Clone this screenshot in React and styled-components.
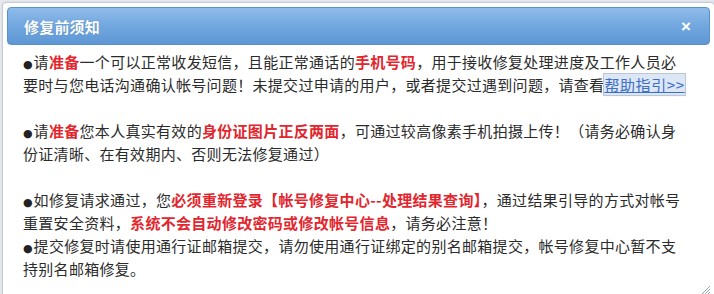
import React from "react";
import styled, { createGlobalStyle } from "styled-components";

const Global = createGlobalStyle`
  html, body { margin: 0; padding: 0; }
  body {
    width: 714px;
    height: 294px;
    overflow: hidden;
    background: #e6eaee;
    font-family: "Noto Sans CJK SC", "Noto Sans", sans-serif;
  }
`;

const Page = styled.div`
  display: flex;
  flex-direction: column;
  padding: 2px 3px 0 2px;
`;

const Dialog = styled.div`
  width: 703px;
  background: #ffffff;
  border: 1px solid #c4ccd6;
  border-radius: 4px;
  padding: 4px 4px 0 4px;
  box-shadow: 0 0 2px rgba(0, 0, 0, 0.12);
  position: relative;
`;

const Header = styled.div`
  height: 36px;
  display: flex;
  align-items: center;
  justify-content: space-between;
  padding: 0 18px 0 16px;
  border: 1px solid #5b91cb;
  border-radius: 4px;
  background: linear-gradient(#8fbcea 0%, #74a9e0 45%, #6aa1db 70%, #5d97d4 100%);
`;

const Title = styled.div`
  color: #ffffff;
  font-size: 15px;
  font-weight: bold;
  letter-spacing: 0.2px;
  text-shadow: 0 0 1px rgba(40, 80, 130, 0.5);
`;

const Close = styled.div`
  color: #ffffff;
  font-family: "Liberation Sans", Arial, sans-serif;
  font-size: 17px;
  font-weight: bold;
  line-height: 1;
`;

const Body = styled.div`
  padding: 5px 0 18px 16px;
  font-size: 15px;
  letter-spacing: 0.3px;
  line-height: 23px;
  color: #2b2b2b;
  white-space: nowrap;
`;

const Para = styled.p`
  margin: 0;
`;

const Bullet = styled.span`
  font-family: "DejaVu Sans", sans-serif;
  font-size: 11px;
  line-height: 0;
  letter-spacing: 0;
  margin-right: 1px;
  color: #222;
`;

const Red = styled.span`
  color: #e2262e;
  font-weight: bold;
`;

const Link = styled.a`
  color: #3d6fc4;
  text-decoration: underline;
  background: #dce6f4;
  outline: 1px solid #b9c6d8;
  box-shadow: 1px 1px 1px rgba(0, 0, 0, 0.15);
  letter-spacing: 0.6px;
  cursor: pointer;
`;

const Grip = styled.svg`
  position: absolute;
  right: 3px;
  bottom: 3px;
  width: 12px;
  height: 12px;
`;

const Below = styled.div`
  display: flex;
  height: 5px;
  margin-top: 1px;
`;

const Brown = styled.div`
  width: 98px;
  margin-left: 128px;
  background: #9a5a3c;
`;

export default function App() {
  return (
    <>
      <Global />
      <Page>
        <Dialog>
          <Header>
            <Title>修复前须知</Title>
            <Close>×</Close>
          </Header>
          <Body>
            <Para>
              <Bullet>●</Bullet>请<Red>准备</Red>一个可以正常收发短信，且能正常通话的<Red>手机号码</Red>，用于接收修复处理进度及工作人员必
              <br />
              要时与您电话沟通确认帐号问题！未提交过申请的用户，或者提交过遇到问题，请查看<Link>帮助指引&gt;&gt;</Link>
            </Para>
            <br />
            <Para>
              <Bullet>●</Bullet>请<Red>准备</Red>您本人真实有效的<Red>身份证图片正反两面</Red>，可通过较高像素手机拍摄上传！（请务必确认身
              <br />
              份证清晰、在有效期内、否则无法修复通过）
            </Para>
            <br />
            <Para>
              <Bullet>●</Bullet>如修复请求通过，您<Red>必须重新登录【帐号修复中心--处理结果查询】</Red>，通过结果引导的方式对帐号
              <br />
              重置安全资料，<Red>系统不会自动修改密码或修改帐号信息</Red>，请务必注意！
            </Para>
            <Para>
              <Bullet>●</Bullet>提交修复时请使用通行证邮箱提交，请勿使用通行证绑定的别名邮箱提交，帐号修复中心暂不支
              <br />
              持别名邮箱修复。
            </Para>
          </Body>
          <Grip viewBox="0 0 12 12">
            <path d="M11 3 L3 11 M11 6 L6 11 M11 9 L9 11" stroke="#9aa4ae" strokeWidth="1" />
          </Grip>
        </Dialog>
        <Below>
          <Brown />
        </Below>
      </Page>
    </>
  );
}
